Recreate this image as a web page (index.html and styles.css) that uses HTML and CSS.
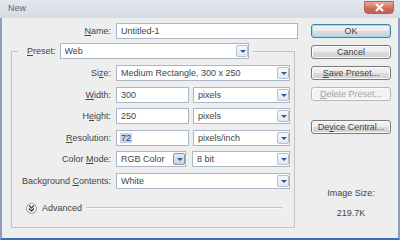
FILE: index.html
```html
<!DOCTYPE html>
<html lang="en">
<head>
    <meta charset="UTF-8">
    <title>New</title>
    <link rel="stylesheet" href="styles.css">
</head>
<body>
    <div class="window">
        <div class="titlebar">
            <span class="title">New</span>
            <span class="close">
                <svg width="11" height="9" viewBox="0 0 11 9"><path d="M2 1 L9 8 M9 1 L2 8" stroke="#fff" stroke-width="2.2" fill="none"/></svg>
            </span>
        </div>

        <div class="client">
            <div class="form">
                <div class="row">
                    <label class="lbl name-lbl"><u>N</u>ame:</label>
                    <div class="field w-name">Untitled-1</div>
                </div>

                <fieldset class="group">
                    <legend>
                        <label class="lbl-inline"><u>P</u>reset:</label>
                        <div class="field select w-preset"><span>Web</span><i class="drop"></i></div>
                    </legend>

                    <div class="rows">
                        <div class="row">
                            <label class="lbl">Si<u>z</u>e:</label>
                            <div class="field select w-full"><span>Medium Rectangle, 300 x 250</span><i class="drop"></i></div>
                        </div>
                        <div class="row">
                            <label class="lbl"><u>W</u>idth:</label>
                            <div class="field w-num">300</div>
                            <div class="field select w-unit"><span>pixels</span><i class="drop"></i></div>
                        </div>
                        <div class="row">
                            <label class="lbl">H<u>e</u>ight:</label>
                            <div class="field w-num">250</div>
                            <div class="field select w-unit"><span>pixels</span><i class="drop"></i></div>
                        </div>
                        <div class="row">
                            <label class="lbl"><u>R</u>esolution:</label>
                            <div class="field w-num"><span class="selected">72</span></div>
                            <div class="field select w-unit"><span>pixels/inch</span><i class="drop"></i></div>
                        </div>
                        <div class="row">
                            <label class="lbl">Color <u>M</u>ode:</label>
                            <div class="field select w-mode"><span>RGB Color</span><i class="drop hot"></i></div>
                            <div class="field select w-bits"><span>8 bit</span><i class="drop"></i></div>
                        </div>
                        <div class="row">
                            <label class="lbl">Background <u>C</u>ontents:</label>
                            <div class="field select w-full"><span>White</span><i class="drop"></i></div>
                        </div>
                    </div>

                    <div class="advanced">
                        <span class="toggle">
                            <svg width="7" height="7" viewBox="0 0 7 7"><path d="M1 0.5 L3.5 3 L6 0.5 M1 3.5 L3.5 6 L6 3.5" stroke="#333" stroke-width="1.1" fill="none"/></svg>
                        </span>
                        <span class="adv-text">Advanced</span>
                        <span class="rule"></span>
                    </div>
                </fieldset>
            </div>

            <div class="side">
                <button class="btn default">OK</button>
                <button class="btn">Cancel</button>
                <button class="btn"><u>S</u>ave Preset...</button>
                <button class="btn" disabled><u>D</u>elete Preset...</button>
                <button class="btn central">De<u>v</u>ice Central...</button>

                <div class="info">
                    <div>Image Size:</div>
                    <div class="size">219.7K</div>
                </div>
            </div>
        </div>
    </div>
</body>
</html>
```

FILE: styles.css
```css
* {
    box-sizing: border-box;
}

body {
    margin: 0;
    font-family: "Liberation Sans", Arial, sans-serif;
    font-size: 9px;
    color: #444;
    background: #eeeeee;
}

.window {
    width: 400px;
    height: 240px;
    display: flex;
    flex-direction: column;
}

.titlebar {
    height: 18px;
    display: flex;
    justify-content: space-between;
    align-items: flex-start;
    background: linear-gradient(#e4e8ef, #d5dbe5);
    padding-left: 8px;
    padding-right: 6px;
}

.title {
    line-height: 17px;
    color: #5f6574;
}

.close {
    width: 30px;
    height: 13px;
    margin-top: 1px;
    display: flex;
    align-items: center;
    justify-content: center;
    border: 1px solid #b06458;
    border-radius: 0 0 4px 4px;
    background: linear-gradient(#e8aca1, #cf6e5f 55%, #c45d4d);
}

.client {
    flex: 1;
    display: flex;
    background: #eeeeee;
    border: 2px solid #8d9cc4;
    border-top: 0;
    border-bottom-color: #3d6fb8;
}

.form {
    width: 302px;
    padding-top: 5px;
}

.row {
    display: flex;
    align-items: center;
    height: 16px;
}

.lbl {
    width: 110px;
    text-align: right;
    padding-right: 1px;
    margin-right: 4px;
}

.group .lbl {
    width: 100px;
}

.field {
    height: 16px;
    display: flex;
    align-items: center;
    background: #fff;
    border: 1px solid #abb7c7;
    padding-left: 4px;
    color: #444;
}

.select span {
    flex: 1;
    white-space: nowrap;
    overflow: hidden;
}

.drop {
    width: 12px;
    height: 12px;
    margin: 1px 0;
    border: 1px solid #b5c0ce;
    border-radius: 2px;
    background: linear-gradient(#f7f9fb, #e3e8ef);
    position: relative;
}

.drop::after {
    content: "";
    position: absolute;
    left: 3px;
    top: 4px;
    border-left: 3px solid transparent;
    border-right: 3px solid transparent;
    border-top: 3px solid #2b5a98;
}

.drop.hot {
    border-color: #8a96a8;
    background: linear-gradient(#e6e9ee, #cdd3dc);
}

.selected {
    background: #c4d5ef;
    color: #1d3d72;
    padding: 0 1px;
    margin-left: -1px;
}

.w-name { width: 182px; }
.w-preset { width: 189px; }
.w-full { width: 174px; }
.w-num { width: 73px; margin-right: 4px; }
.w-unit { width: 97px; }
.w-mode { width: 70px; margin-right: 6px; }
.w-bits { width: 98px; }

.group {
    margin: 4px 0 0 9px;
    width: 284px;
    padding: 0 0 13px 0;
    border: 1px solid #c3c3c3;
}

.group legend {
    display: flex;
    align-items: center;
    margin-left: 6px;
    padding: 0 4px 0 9px;
}

.lbl-inline {
    margin-right: 4px;
}

.rows {
    display: flex;
    flex-direction: column;
    gap: 5.6px;
    padding-top: 6px;
}

.advanced {
    display: flex;
    align-items: center;
    height: 11px;
    margin-top: 14px;
    padding-left: 14px;
    padding-right: 11px;
}

.toggle {
    width: 11px;
    height: 11px;
    border-radius: 50%;
    border: 1px solid #9a9a9a;
    background: linear-gradient(#ffffff, #e2e2e2);
    display: flex;
    align-items: center;
    justify-content: center;
}

.adv-text {
    margin: 0 4px 0 5px;
}

.rule {
    flex: 1;
    height: 2px;
    border-top: 1px solid #c3c3c3;
    border-bottom: 1px solid #fafafa;
}

.side {
    width: 80px;
    margin-left: 7px;
    padding-top: 6px;
    display: flex;
    flex-direction: column;
    gap: 7px;
}

.btn {
    height: 14px;
    padding: 0;
    font-family: inherit;
    font-size: 9px;
    color: #444;
    border: 1px solid #7a7a7a;
    border-radius: 3px;
    background: linear-gradient(#f3f3f3 0%, #ebebeb 48%, #dcdcdc 52%, #cfcfcf 100%);
    box-shadow: inset 0 0 0 1px #fbfbfb;
}

.btn.default {
    border-color: #3c7fb1;
    box-shadow: inset 0 0 0 1px #9fdcf4;
}

.btn:disabled {
    color: #a6a6a6;
    border-color: #b3b8bc;
    background: #f2f2f2;
}

.btn.central {
    margin-top: 12px;
}

.info {
    margin-top: 47px;
    text-align: center;
    line-height: 11px;
}

.info .size {
    margin-top: 9px;
}
```
